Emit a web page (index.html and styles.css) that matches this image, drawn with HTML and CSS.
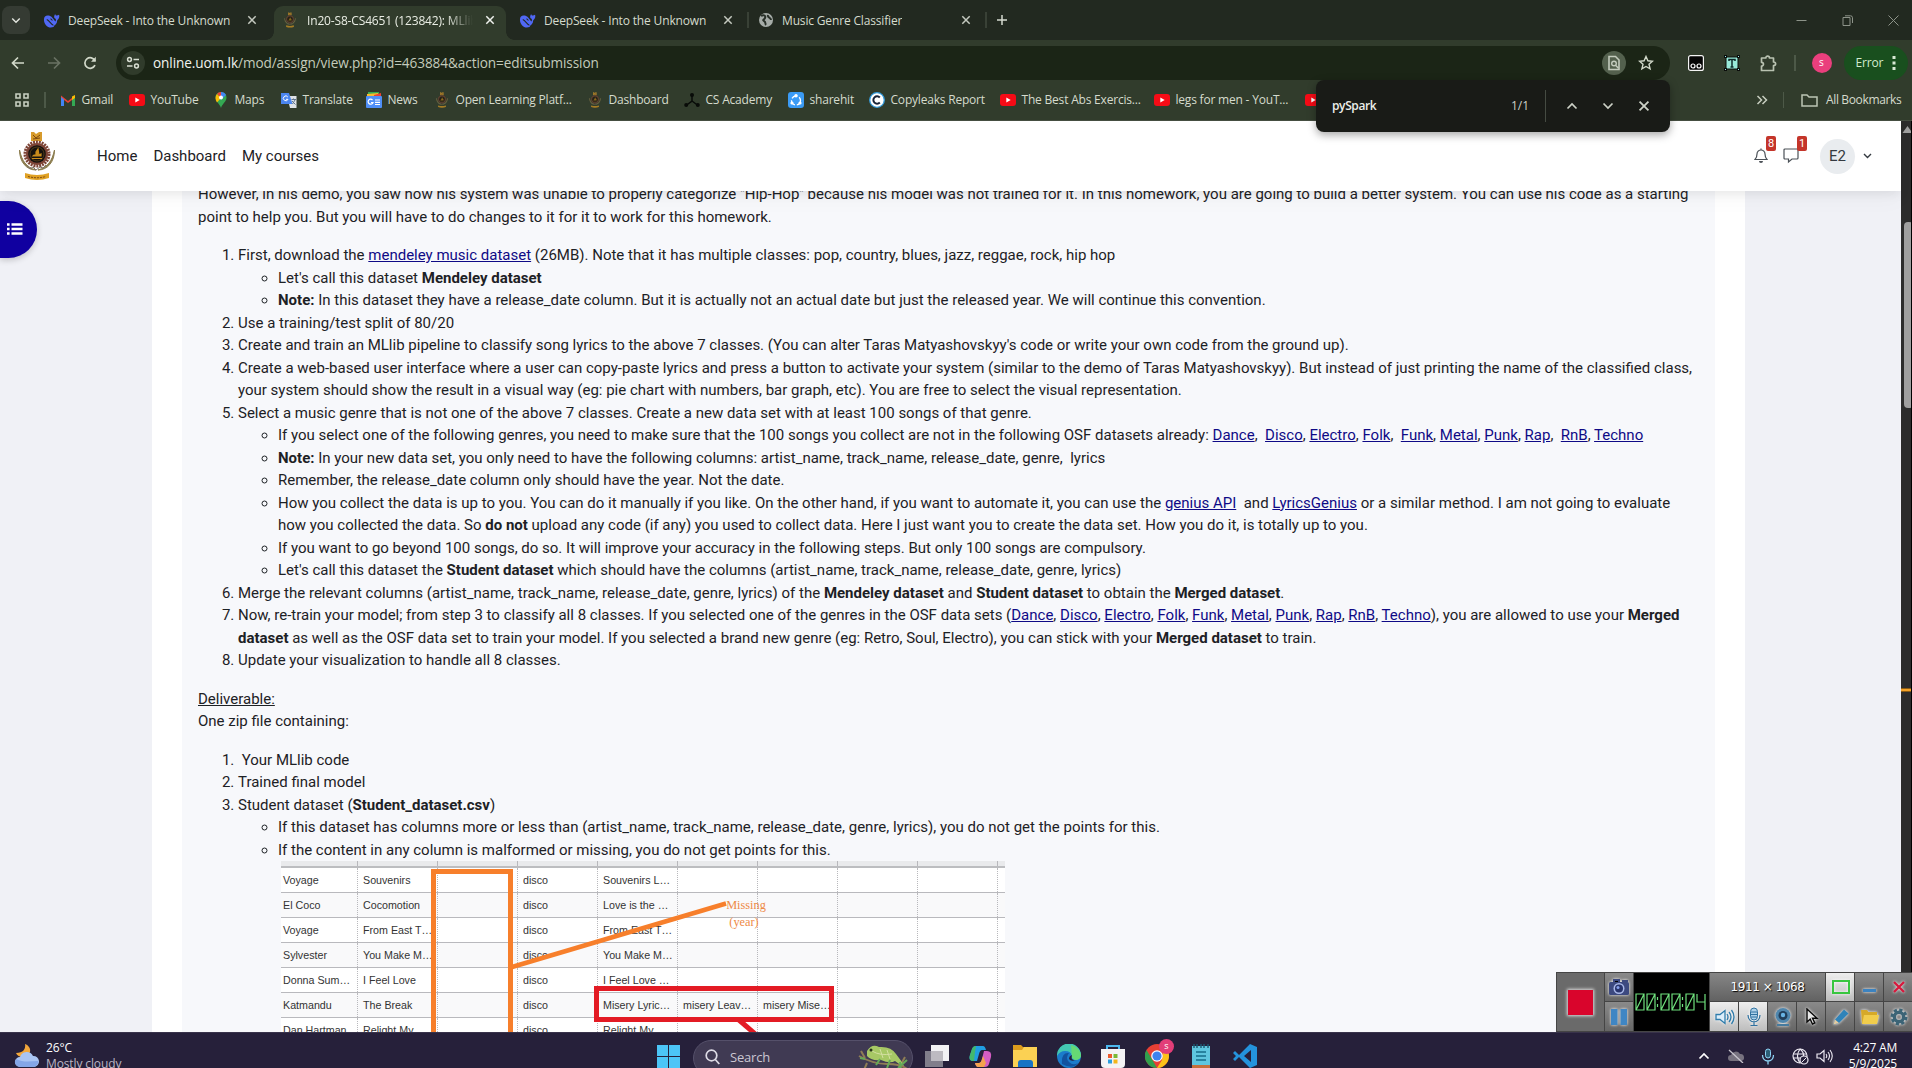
FILE: index.html
```html
<!DOCTYPE html>
<html lang="en">
<head>
<meta charset="utf-8">
<title>In20-S8-CS4651 (123842): MLlib</title>
<link rel="stylesheet" href="styles.css">
</head>
<body>
<svg class="defs" aria-hidden="true">
  <symbol id="whale" viewBox="0 0 18 18"><path d="M1 8C1 4 4 3 7 4c3 1 4 4 6 6 1-1 1-2 0-3-2-1-1-4 0-5 0 2 2 2 4 1 1 3-1 5-2 6 0 3-2 5-4 6 1 0 1 1 0 1-5 2-10-2-10-8z" fill="#5068f5"/><path d="M4 8c3 1 4 5 7 6M8 7l2 2" stroke="#222920" stroke-width="1.1" fill="none"/></symbol>
  <symbol id="x" viewBox="0 0 10 10"><path d="M1.3 1.3l7.4 7.4M8.7 1.3L1.3 8.7" stroke="currentColor" stroke-width="1.5" fill="none"/></symbol>
  <symbol id="crest" viewBox="0 0 38 50"><path d="M13 1h3l2 2 3-2h3v9H13z" fill="#d79b2c"/><path d="M15 4l3 3 4-3M15 8l7-1" stroke="#7c4a12" fill="none"/><circle cx="19" cy="23" r="12" fill="none" stroke="#7d4436" stroke-width="3" stroke-dasharray="2 .9"/><circle cx="19" cy="23" r="11" fill="#7d4436"/><circle cx="19" cy="23" r="8.800" fill="#15120f"/><circle cx="19" cy="23" r="7" fill="none" stroke="#6b4a1c" stroke-width=".7"/><path d="M14 27.500h10M15 25h8v-2l-2 1-1-6-2 3v3h-2z" stroke="#c98b1c" stroke-width="1.200" fill="#c98b1c"/><path d="M1.500 19c0 12 7 20 16.500 20C8 36 4 30 1.500 19zM36.500 19c0 12-7 20-16.500 20C30 36 34 30 36.500 19z" stroke="#8b7c4e" stroke-width="1" fill="#8b7c4e"/><path d="M9 35l3 3 3-2 3 3 4-3 3 1 3-3" stroke="#7d746a" fill="none"/><path d="M7 42q12 4 24 0v5q-12 4-24 0z" fill="#e0a124"/><path d="M10 45.500q9 2.500 18 0" stroke="#7c4a12" stroke-dasharray="2 1" fill="none"/></symbol>
  <symbol id="yt" viewBox="0 0 16 16"><rect y="2" width="16" height="12" rx="3" fill="#f60b16"/><path d="M6.300 5.500v5l4.400-2.500z" fill="#fff"/></symbol>
  <symbol id="up" viewBox="0 0 12 8"><path d="M1.500 6.500L6 2l4.500 4.500" stroke="currentColor" stroke-width="1.700" fill="none"/></symbol>
  <symbol id="down" viewBox="0 0 12 8"><path d="M1.500 1.500L6 6l4.500-4.500" stroke="currentColor" stroke-width="1.700" fill="none"/></symbol>
</svg>

<div class="browser">
  <div class="tabstrip">
    <button class="tabsearch"><svg width="10" height="7"><use href="#down"/></svg></button>
    <div class="tab first"><svg width="17" height="17"><use href="#whale"/></svg><span class="title">DeepSeek - Into the Unknown</span><svg class="close" width="10" height="10"><use href="#x"/></svg></div>
    <div class="tab active"><svg class="crest-small" width="12" height="16"><use href="#crest"/></svg><span class="title fade">In20-S8-CS4651 (123842): MLlib</span><svg class="close" width="10" height="10"><use href="#x"/></svg></div>
    <div class="tab third"><svg width="17" height="17"><use href="#whale"/></svg><span class="title">DeepSeek - Into the Unknown</span><svg class="close" width="10" height="10"><use href="#x"/></svg></div>
    <div class="tab fourth"><svg width="16" height="16" viewBox="0 0 16 16"><circle cx="8" cy="8" r="7" fill="#a6aca8"/><path d="M3 4c3-2 5 0 4 2S4 8 6 9s1 3 2 4M10 3c-1 3 3 2 3 5" stroke="#283028" stroke-width="2" fill="none"/></svg><span class="title">Music Genre Classifier</span><svg class="close" width="10" height="10"><use href="#x"/></svg></div>
    <svg class="plus" width="12" height="12"><path d="M6 1v10M1 6h10" stroke="#d5dacf" stroke-width="1.500"/></svg>
    <div class="winctl">
      <svg width="11" height="11"><path d="M.5 5.500h10" stroke="#8d9389"/></svg>
      <svg width="11" height="11"><path d="M1 2.500h7v8H1zM3 .8h5.500q2 0 2 2V8" stroke="#8d9389" fill="none"/></svg>
      <svg width="11" height="11"><path d="M.5.500l10 10M10.500.500l-10 10" stroke="#8d9389"/></svg>
    </div>
  </div>

  <div class="toolbar">
    <svg class="back" width="14" height="14"><path d="M13 7H2M7 1.500L1.500 7 7 12.500" stroke="#d2d9ca" stroke-width="1.700" fill="none"/></svg>
    <svg class="fwd" width="14" height="14"><path d="M1 7h11M7 1.500L12.500 7 7 12.500" stroke="#697263" stroke-width="1.700" fill="none"/></svg>
    <svg class="reload" width="14" height="14"><path d="M12 9.200A5.300 5.300 0 1 1 12 4.800" stroke="#d2d9ca" stroke-width="1.700" fill="none"/><path d="M12.800.8v5H8z" fill="#d2d9ca"/></svg>
    <div class="omnibox">
      <span class="siteinfo"><svg width="14" height="14"><circle cx="3.500" cy="3.500" r="1.900" stroke="#d8ded2" stroke-width="1.500" fill="none"/><circle cx="10.500" cy="10" r="1.900" stroke="#d8ded2" stroke-width="1.500" fill="none"/><path d="M7.500 3.500h5.500M1 10h5.500" stroke="#d8ded2" stroke-width="1.600"/></svg></span>
      <span class="url"><b>online.uom.lk</b>/mod/assign/view.php?id=463884&amp;action=editsubmission</span>
      <span class="findmark"><svg width="14" height="16"><path d="M2 1.500h6.500L12 5v9.500H2z" stroke="#c3cbbd" stroke-width="1.600" fill="none"/><circle cx="7" cy="8.500" r="2.300" stroke="#c3cbbd" stroke-width="1.400" fill="none"/><path d="M8.500 10.200l3 3" stroke="#c3cbbd" stroke-width="1.400"/></svg></span>
      <svg class="star" width="16" height="16"><path d="M8 1.500l1.900 4.300 4.600.4-3.500 3.100 1.100 4.600L8 11.500l-4.100 2.400L5 9.300 1.500 6.200l4.600-.4z" stroke="#d2d9ca" stroke-width="1.400" fill="none"/></svg>
    </div>
    <svg class="ext1" width="16" height="16"><rect x=".6" y=".6" width="14.800" height="14.800" rx="2" fill="#050505" stroke="#f4f4f4" stroke-width="1.200"/><circle cx="5" cy="11" r="2" fill="none" stroke="#fff" stroke-width="1.200"/><circle cx="11" cy="11" r="2" fill="none" stroke="#fff" stroke-width="1.200"/></svg>
    <svg class="ext2" width="16" height="16"><rect x="2" y="2" width="12" height="12" fill="#98ead9" stroke="#0a0d0a"/><path d="M5 6V4.500h6V6M8 4.500V12M6.500 12h3" stroke="#0d2a2a" stroke-width="1.500" fill="none"/><path d="M0 0h3v3H0zM13 0h3v3h-3zM0 13h3v3H0zM13 13h3v3h-3z" fill="#0b0d0b"/><path d="M1 1h1v1H1zM14 1h1v1h-1zM1 14h1v1H1zM14 14h1v1h-1z" fill="#9ee"/></svg>
    <svg class="puzzle" width="17" height="17"><path d="M1.500 3h4.300c0-2.600 3.700-2.600 3.700 0H13.500v4c2.800 0 2.800 3.700 0 3.700v4.800H1.500v-4.500c2.600 0 2.600-3.700 0-3.700z" stroke="#b9c2b1" stroke-width="1.700" fill="none" stroke-linejoin="round"/></svg>
    <i class="vsep"></i>
    <span class="profile">s</span>
    <span class="error">Error<svg width="4" height="16"><path d="M.5 1h3v3h-3zM.5 6.500h3v3h-3zM.5 12h3v3h-3z" fill="#d9ead5"/></svg></span>
  </div>

  <div class="bookmarks">
    <svg class="apps" width="14" height="14"><path d="M1 1h4v4H1zM9 1h4v4H9zM1 9h4v4H1zM9 9h4v4H9z" stroke="#c8cfc1" stroke-width="1.600" fill="none"/></svg>
    <i class="vsep"></i>
    <div class="items">
      <span><svg width="16" height="16"><path d="M1 14V3.500L8 9l7-5.500V14h-3V8l-4 3-4-3v6z" fill="#ea4335"/><path d="M1 5v9h3V7.500z" fill="#4285f4"/><path d="M15 5v9h-3V7.500z" fill="#34a853"/><path d="M12 4.500l3-1.500v3l-3 2z" fill="#fbbc04"/></svg><em>Gmail</em></span>
      <span><svg width="16" height="16"><use href="#yt"/></svg><em>YouTube</em></span>
      <span><svg width="16" height="16"><path d="M8 0a5.500 5.500 0 0 1 5.500 5.500C13.500 10 9.500 11 8 16 6.500 11 2.500 10 2.500 5.500A5.500 5.500 0 0 1 8 0z" fill="#34a853"/><path d="M8 0a5.500 5.500 0 0 1 5 3L8 8z" fill="#4285f4"/><path d="M4 2L8 6l-4 4.500C2 7.500 2 4 4 2z" fill="#fbbc04"/><path d="M4 1.800A5 5 0 0 1 8 0v6z" fill="#ea4335"/><circle cx="8" cy="5.500" r="2" fill="#fff"/></svg><em>Maps</em></span>
      <span><svg width="16" height="16"><path d="M6 4h9.500v12H9z" fill="#dfe3e8"/><path d="M0 1h8l3.500 11H0z" fill="#4b86f0"/><path d="M6.800 5A2.400 2.400 0 1 0 7 7.300H5" stroke="#fff" fill="none"/><path d="M10.500 7.500H15M12.500 6.500v1M11 9l3.500 3.500M14 8l-2.500 4" stroke="#60758e" fill="none"/></svg><em>Translate</em></span>
      <span><svg width="16" height="16"><path d="M2 0h11v6H2z" fill="#37a852"/><path d="M1 2l11-1v5H1z" fill="#f9bb2d"/><path d="M8 3l7-2v5H8z" fill="#e94335"/><rect y="4" width="16" height="12" rx="1" fill="#4f8ff7"/><path d="M6.500 8a2.500 2.500 0 1 0 .5 2.500H5M9 8h5M9 10.300h5M9 12.500h5" stroke="#fff" stroke-width="1.200" fill="none"/></svg><em>News</em></span>
      <span><svg class="crest-small" width="16" height="16"><use href="#crest"/></svg><em>Open Learning Platf...</em></span>
      <span><svg class="crest-small" width="16" height="16"><use href="#crest"/></svg><em>Dashboard</em></span>
      <span><svg width="16" height="16"><path d="M8 3v6L2 13.500M8 9l6 4.500" stroke="#080b08" stroke-width="1.500" fill="none"/><circle cx="8" cy="3" r="2" fill="#080b08"/><circle cx="2.200" cy="13" r="2" fill="#080b08"/><circle cx="13.800" cy="13" r="2" fill="#080b08"/></svg><em>CS Academy</em></span>
      <span><svg width="16" height="16"><rect width="16" height="16" rx="3" fill="#3b9bf5"/><circle cx="8" cy="8.500" r="4.500" fill="none" stroke="#fff" stroke-width="1.300" stroke-dasharray="6 2"/><circle cx="8" cy="3.800" r="1.700" fill="#fff"/><circle cx="4" cy="11" r="1.600" fill="#fff"/><circle cx="12" cy="11" r="1.600" fill="#fff"/></svg><em>sharehit</em></span>
      <span><svg width="16" height="16"><circle cx="8" cy="8" r="7.300" fill="#fff" stroke="#339bdc" stroke-width="1.300"/><path d="M10.800 5.500A3.700 3.700 0 1 0 10.800 10.500" stroke="#172236" stroke-width="2" fill="none"/></svg><em>Copyleaks Report</em></span>
      <span><svg width="16" height="16"><use href="#yt"/></svg><em>The Best Abs Exercis...</em></span>
      <span><svg width="16" height="16"><use href="#yt"/></svg><em>legs for men - YouT...</em></span>
      <span><svg width="16" height="16"><use href="#yt"/></svg></span>
    </div>
    <svg class="more" width="12" height="10"><path d="M1.500 1L5.500 5l-4 4M6.500 1l4 4-4 4" stroke="#c8cfc1" stroke-width="1.500" fill="none"/></svg>
    <i class="vsep"></i>
    <svg class="folder" width="17" height="13"><path d="M1 1h5l2 2h8v9H1z" stroke="#bcc5b4" stroke-width="1.500" fill="none"/></svg>
    <em class="all">All Bookmarks</em>
  </div>

  <div class="findbar"><b>pySpark</b><span>1/1</span><i></i><svg width="12" height="8"><use href="#up"/></svg><svg width="12" height="8"><use href="#down"/></svg><svg width="12" height="12"><use href="#x"/></svg></div>
</div>

<div class="viewport">
  <div class="page">
    <header class="sitenav">
      <svg class="logo" width="38" height="50"><use href="#crest"/></svg>
      <nav><a>Home</a><a>Dashboard</a><a>My courses</a></nav>
      <div class="user">
        <span class="ico bell"><svg width="14" height="16"><path d="M1 11.500h12c-1.500-1.500-2-2.500-2-5.500a4 4 0 0 0-8 0c0 3-.5 4-2 5.500zM7 .5v1.500" stroke="#4b5157" stroke-width="1.200" fill="none"/><path d="M5 13h4a2 2 0 0 1-4 0z" fill="#4b5157"/></svg><b>8</b></span>
        <span class="ico chat"><svg width="16" height="16"><path d="M2 1h12q1 0 1 1v8q0 1-1 1H9l-3.500 3V11H2q-1 0-1-1V2q0-1 1-1z" stroke="#4b5157" stroke-width="1.200" fill="none"/></svg><b>1</b></span>
        <span class="avatar">E2</span>
        <svg class="caret" width="9" height="6"><path d="M1 1l3.500 3.500L8 1" stroke="#343a40" stroke-width="1.400" fill="none"/></svg>
      </div>
    </header>
    <main>
      <button class="drawer"><svg width="16" height="12"><path d="M0 1.500h2.600M4.500 1.500h11M0 6h2.600M4.500 6h11M0 10.500h2.600M4.500 10.500h11" stroke="#fff" stroke-width="2.400"/></svg></button>
      <div class="card">
        <article>
          <p>However, in his demo, you saw how his system was unable to properly categorize "Hip-Hop" because his model was not trained for it. In this homework, you are going to build a better system. You can use his code as a starting<br>point to help you. But you will have to do changes to it for it to work for this homework.</p>
          <ol>
            <li>First, download the <a>mendeley music dataset</a> (26MB). Note that it has multiple classes: pop, country, blues, jazz, reggae, rock, hip hop
              <ul>
                <li>Let's call this dataset <b>Mendeley dataset</b></li>
                <li><b>Note:</b> In this dataset they have a release_date column. But it is actually not an actual date but just the released year. We will continue this convention.</li>
              </ul></li>
            <li>Use a training/test split of 80/20</li>
            <li>Create and train an MLlib pipeline to classify song lyrics to the above 7 classes. (You can alter Taras Matyashovskyy's code or write your own code from the ground up).</li>
            <li>Create a web-based user interface where a user can copy-paste lyrics and press a button to activate your system (similar to the demo of Taras Matyashovskyy). But instead of just printing the name of the classified class,<br>your system should show the result in a visual way (eg: pie chart with numbers, bar graph, etc). You are free to select the visual representation.</li>
            <li>Select a music genre that is not one of the above 7 classes. Create a new data set with at least 100 songs of that genre.
              <ul>
                <li>If you select one of the following genres, you need to make sure that the 100 songs you collect are not in the following OSF datasets already: <a>Dance</a>,&nbsp; <a>Disco</a>, <a>Electro</a>, <a>Folk</a>,&nbsp; <a>Funk</a>, <a>Metal</a>, <a>Punk</a>, <a>Rap</a>,&nbsp; <a>RnB</a>, <a>Techno</a></li>
                <li><b>Note:</b> In your new data set, you only need to have the following columns: artist_name, track_name, release_date, genre,&nbsp; lyrics</li>
                <li>Remember, the release_date column only should have the year. Not the date.</li>
                <li>How you collect the data is up to you. You can do it manually if you like. On the other hand, if you want to automate it, you can use the <a>genius API</a>&nbsp; and <a>LyricsGenius</a> or a similar method. I am not going to evaluate<br>how you collected the data. So <b>do not</b> upload any code (if any) you used to collect data. Here I just want you to create the data set. How you do it, is totally up to you.</li>
                <li>If you want to go beyond 100 songs, do so. It will improve your accuracy in the following steps. But only 100 songs are compulsory.</li>
                <li>Let's call this dataset the <b>Student dataset</b> which should have the columns (artist_name, track_name, release_date, genre, lyrics)</li>
              </ul></li>
            <li>Merge the relevant columns (artist_name, track_name, release_date, genre, lyrics) of the <b>Mendeley dataset</b> and <b>Student dataset</b> to obtain the <b>Merged dataset</b>.</li>
            <li>Now, re-train your model; from step 3 to classify all 8 classes. If you selected one of the genres in the OSF data sets (<a>Dance</a>, <a>Disco</a>, <a>Electro</a>, <a>Folk</a>, <a>Funk</a>, <a>Metal</a>, <a>Punk</a>, <a>Rap</a>, <a>RnB</a>, <a>Techno</a>), you are allowed to use your <b>Merged<br>dataset</b> as well as the OSF data set to train your model. If you selected a brand new genre (eg: Retro, Soul, Electro), you can stick with your <b>Merged dataset</b> to train.</li>
            <li>Update your visualization to handle all 8 classes.</li>
          </ol>
          <p><u>Deliverable:</u><br>One zip file containing:</p>
          <ol>
            <li>&nbsp;Your MLlib code</li>
            <li>Trained final model</li>
            <li>Student dataset (<b>Student_dataset.csv</b>)
              <ul>
                <li>If this dataset has columns more or less than (artist_name, track_name, release_date, genre, lyrics), you do not get the points for this.</li>
                <li>If the content in any column is malformed or missing, you do not get points for this.</li>
              </ul></li>
          </ol>
          <div class="sheet">
            <div class="row head"><i></i><i></i><i></i><i></i><i></i><i></i><i></i><i></i><i></i></div>
            <div class="row"><i>Voyage</i><i>Souvenirs</i><i></i><i>disco</i><i>Souvenirs L…</i><i></i><i></i><i></i><i></i></div>
            <div class="row"><i>El Coco</i><i>Cocomotion</i><i></i><i>disco</i><i>Love is the …</i><i></i><i></i><i></i><i></i></div>
            <div class="row"><i>Voyage</i><i>From East T…</i><i></i><i>disco</i><i>From East T…</i><i></i><i></i><i></i><i></i></div>
            <div class="row"><i>Sylvester</i><i>You Make M…</i><i></i><i>disco</i><i>You Make M…</i><i></i><i></i><i></i><i></i></div>
            <div class="row"><i>Donna Sum…</i><i>I Feel Love</i><i></i><i>disco</i><i>I Feel Love …</i><i></i><i></i><i></i><i></i></div>
            <div class="row"><i>Katmandu</i><i>The Break</i><i></i><i>disco</i><i>Misery Lyric…</i><i>misery Leav…</i><i>misery Mise…</i><i></i><i></i></div>
            <div class="row"><i>Dan Hartman</i><i>Relight My</i><i></i><i>disco</i><i>Relight My</i><i></i><i></i><i></i><i></i></div>
            <svg class="marks" width="724" height="182" viewBox="281 861 724 182"><path d="M433.500 1050V871.500h77V1050" stroke="#f77f2b" stroke-width="5" fill="none"/><path d="M512 967L726 903.500" stroke="#f77f2b" stroke-width="4.600"/><path d="M596.500 988.500h235v31h-235z" stroke="#e31b24" stroke-width="5" fill="none"/><path d="M739 1020l22 19" stroke="#e31b24" stroke-width="5"/></svg>
            <span class="note">Missing<br><span>(year)</span></span>
          </div>
        </article>
      </div>
    </main>
  </div>
  <div class="scrollbar"><svg width="10" height="9"><path d="M1.500 8L6.500 1 11.500 8z" fill="#a0a0a0"/></svg><i class="thumb"></i><i class="hit"></i></div>
  <div class="edge"></div>
</div>

<div class="recorder">
  <span class="rec"><i></i></span>
  <div class="col">
    <span class="cell"><svg width="22" height="18"><rect x="1" y="4" width="20" height="13" rx="1.500" fill="#3d4a80"/><path d="M6 4V2h5v2M15 4V3h4v1" stroke="#3d4a80" stroke-width="2"/><circle cx="11" cy="10.500" r="5.500" fill="#a9b8e8"/><circle cx="11" cy="10.500" r="4" fill="#28346c"/><circle cx="10" cy="9.500" r="1.500" fill="#87a0ea"/></svg></span>
    <span class="cell"><svg width="16" height="16"><path d="M0 0h6.500v16H0zM9.500 0H16v16H9.500z" fill="#3f86c4"/></svg></span>
  </div>
  <div class="timer">
    <svg width="72" height="20" viewBox="0 0 72 20" aria-label="00:00:04"><g stroke="#6fe07d" stroke-width="1.200" fill="none"><path id="z" d="M1 2h8v16H1zM9 2L1 18"/><use href="#z" x="11"/><use href="#z" x="25"/><use href="#z" x="36"/><use href="#z" x="50"/><path d="M62 2v8h8M70 2v16"/><path d="M22.500 5v3M22.500 12v3M47.500 5v3M47.500 12v3"/></g></svg>
  </div>
  <div class="controls">
    <span class="size">1911 × 1068</span>
    <span class="cell on"><svg width="18" height="14"><path d="M1 1h16v12H1z" stroke="#38c63f" stroke-width="2" fill="none"/></svg></span>
    <span class="cell"><svg width="14" height="14"><path d="M0 9h13v3H0z" fill="#3c83c0"/></svg></span>
    <span class="cell"><svg width="12" height="12"><path d="M1 1l10 10M11 1L1 11" stroke="#d8173c" stroke-width="2.300"/></svg></span>
    <span class="cell on"><svg width="20" height="18"><path d="M1 6.500h4l5-4v13l-5-4H1z" fill="#dceefa" stroke="#2f7cab" stroke-width="1.300"/><path d="M12 6q2 3 0 6M14 4q4 5 0 10M16.500 2q5 7 0 14" stroke="#2f7cab" stroke-width="1.300" fill="none"/></svg></span>
    <span class="cell on"><svg width="14" height="20"><rect x="3.500" y="1" width="7" height="12" rx="3.500" fill="#acd0e8" stroke="#2f719f"/><path d="M4 5h6M4 7.500h6M4 10h6M1 8c0 9 12 9 12 0M7 15v3M3.500 18.500h7" stroke="#2f719f" stroke-width="1.200" fill="none"/></svg></span>
    <span class="cell"><svg width="18" height="20"><circle cx="9" cy="8.500" r="7.500" fill="#4f86ad"/><circle cx="9" cy="8.500" r="4.500" fill="#213e5a"/><circle cx="9" cy="8" r="2.200" fill="#6ab4e4"/><path d="M3 17h12v2H3z" fill="#477b9f"/></svg></span>
    <span class="cell"><svg width="14" height="18"><path d="M2 1v13l3.200-2.800L7.500 16l2.300-1-2.300-4.700H12z" fill="#e8e8e8" stroke="#080808" stroke-width="1.400"/></svg></span>
    <span class="cell"><svg width="18" height="18"><path d="M1.500 16.500l1.500-5L12 1.500l4.500 4L7 15z" fill="#2f83b9"/><path d="M1.500 16.500l1.500-5 4 3.500z" fill="#e5cba0"/></svg></span>
    <span class="cell"><svg width="18" height="16"><path d="M0 1h6l1.500 2H16v12H1z" fill="#d6a928"/><path d="M3 6h15l-2 9H1z" fill="#f1cd4c"/></svg></span>
    <span class="cell"><svg width="18" height="18"><circle cx="9" cy="9" r="7" fill="none" stroke="#3c6476" stroke-width="3" stroke-dasharray="3.200 2.300"/><circle cx="9" cy="9" r="4.700" fill="none" stroke="#3c6476" stroke-width="3.500"/></svg></span>
  </div>
</div>

<footer class="taskbar">
  <svg class="weather" width="26" height="25"><path d="M11 1c1 5-2 9-9 9 2 5 11 6 14-1 1-4-2-7-5-8z" fill="#f2a73b"/><path d="M6 24a5 5 0 0 1 0-10 7 7 0 0 1 13-1 5.500 5.500 0 0 1 1 11z" fill="#a9c4f3"/><path d="M6 24a5 5 0 0 1-4-8c8 4 15 2 22 2a5 5 0 0 1-4 6z" fill="#84a6e7"/></svg>
  <div class="temp">26°C<br><span>Mostly cloudy</span></div>
  <svg class="start" width="24" height="24"><path d="M0 0h11v11H0zM12 0h11v11H12zM0 12h11v11H0zM12 12h11v11H12z" fill="#4cc5f7"/></svg>
  <div class="search"><svg width="15" height="16"><circle cx="6.500" cy="6.500" r="5.300" stroke="#dedce6" stroke-width="1.700" fill="none"/><path d="M10.300 10.500l4 4.500" stroke="#dedce6" stroke-width="1.700"/></svg><span>Search</span>
    <svg class="lizard" width="52" height="26"><path d="M1 11q14 8 28 8t20 5M9 18l-3 7M3 6l4 7M47 12l-5 9" stroke="#8f7d55" stroke-width="2" fill="none"/><path d="M9 6q5-8 12-4 12-1 17 7 5 6 8 12-6-2-9-5-5 3-14-1-10 1-14-4z" fill="#a7c865"/><path d="M14 6q8 5 20 3M22 4l3 9M29 5l3 9" stroke="#d3dfa0" fill="none"/><path d="M22 14l-4 6M32 15l-3 8M42 17l1 7M2 13l5 1M40 23l9-8" stroke="#63a957" stroke-width="2"/><circle cx="13" cy="5" r="1.500" fill="#28351b"/></svg></div>
  <svg class="app taskview" width="24" height="24"><rect x="6" width="18" height="16" fill="#f2f1f4"/><rect y="6" width="18" height="16" fill="#8c8895" fill-opacity=".9"/><path d="M6 6h12v10H6z" fill="#bdbac1"/></svg>
  <svg class="app copilot" width="24" height="24"><path d="M7 1h7q2 0 3 4h-4q-2 0-3 4l-2 7H5q-6 0-4-6l2-6q1-3 4-3z" fill="#209de1"/><path d="M1 10l2-6q1-3 4-3l-1 6-1 9q-6 0-4-6z" fill="#43b86c"/><path d="M15 6h3q5 0 4 6l-2 7q-1 3-4 3H9q-2 0-3-4h4q2 0 3-4z" fill="#d45dc3"/><path d="M6 18h4q2 0 3-4l1-3 3 7-2 4H9q-2 0-3-4z" fill="#f4a34e"/></svg>
  <svg class="app" width="24" height="24"><path d="M0 1h8l2 2h14v20H0z" fill="#dc9c1d"/><path d="M0 6h9l2-3h13v20H0z" fill="#fbd153"/><path d="M5 23v-4q0-3 3-3h9q3 0 3 3v4z" fill="#1974c5"/></svg>
  <svg class="app" width="24" height="24"><circle cx="12" cy="12" r="12" fill="#1b7ccb"/><path d="M0 12A12 12 0 0 1 24 11q0 5-6 5-4-1-3-4-1-5-7-5-5 0-8 5z" fill="#43c7b1"/><path d="M14 1q10 3 10 11-1 4-6 4l-3-2z" fill="#66d974"/><path d="M5 20q-1-12 7-11-4 5 0 9 4 4 9 1-5 7-16 1z" fill="#12539f"/><path d="M15 11q-2 6 4 5-5 2-7-1 0-3 3-4z" fill="#26203a"/></svg>
  <svg class="app" width="24" height="24"><path d="M6 6V2h12v4" stroke="#4cb8ee" stroke-width="2" fill="none"/><path d="M0 5h24v15q0 4-4 4H4q-4 0-4-4z" fill="#f4f3f5"/><path d="M7 10h4v4H7z" fill="#ed5a2c"/><path d="M12.500 10h4v4h-4z" fill="#7ab936"/><path d="M7 15.500h4v4H7z" fill="#2b9ee0"/><path d="M12.500 15.500h4v4h-4z" fill="#f4b61b"/></svg>
  <div class="app chrome"><svg width="24" height="24"><circle cx="12" cy="12" r="12" fill="#e64034"/><path d="M1.500 6l6 10L12 24A12 12 0 0 1 1.500 6z" fill="#31a04d"/><path d="M12 24l5-8 1-8h5.300A12 12 0 0 1 12 24z" fill="#fbc219"/><circle cx="12" cy="12" r="5.800" fill="#fff"/><circle cx="12" cy="12" r="4.600" fill="#3f82ee"/></svg><b>s</b></div>
  <svg class="app note-app" width="20" height="24"><path d="M1 2h18v19H1z" fill="#5fc6df"/><path d="M3 0v4M6 0v4M10 0v4M13 0v4M17 0v4" stroke="#1b5a72" stroke-width="1.400"/><path d="M5 8h10M5 12h10M5 16h10" stroke="#176d8b" stroke-width="1.700"/><path d="M1 21h18v3H1z" fill="#c66f3b"/></svg>
  <svg class="app" width="24" height="24"><path d="M17 0l7 3v18l-7 3L6 13l-4 4-2-2 3-3-3-3 2-2 4 4zM18 6l-7 6 7 6z" fill="#2493dc" fill-rule="evenodd"/></svg>
  <div class="tray">
    <svg width="12" height="8"><use href="#up"/></svg>
    <svg width="18" height="14"><path d="M4 12a3 3 0 0 1 0-6 5 5 0 0 1 9-1 3.500 3.500 0 0 1 1 7z" fill="#77727f"/><path d="M2 1l14 13" stroke="#c9c5ce" stroke-width="1.300"/></svg>
    <svg width="14" height="17"><rect x="4.500" y="1" width="5" height="9" rx="2.500" fill="#2c5f78" stroke="#8fd4f5"/><path d="M1.500 7c0 8 11 8 11 0M7 13v3.500" stroke="#8fd4f5" stroke-width="1.300" fill="none"/></svg>
    <svg width="17" height="17"><circle cx="8" cy="8" r="7" stroke="#eeeaf3" stroke-width="1.200" fill="none"/><path d="M1 6h14M1 10h8M8 1q-5 7 0 14M8 1q4 3 3.500 7" stroke="#eeeaf3" stroke-width="1.200" fill="none"/><circle cx="12" cy="12" r="4" fill="#26203a" stroke="#eeeaf3" stroke-width="1.200"/><path d="M9.500 14.500l5-5" stroke="#eeeaf3"/></svg>
    <svg width="17" height="14"><path d="M1 5h3l4-3.500v11L4 9H1z" stroke="#eeeaf3" stroke-width="1.200" fill="none"/><path d="M10 5q1.500 2 0 4M12 3q3 4 0 8M14 1q4.500 6 0 12" stroke="#eeeaf3" stroke-width="1.100" fill="none"/></svg>
    <div class="clock">4:27 AM<br>5/9/2025</div>
  </div>
</footer>
</body>
</html>
```
FILE: styles.css
```css
* { box-sizing: border-box; }
body { margin: 0; width: 1912px; height: 1068px; overflow: hidden; position: relative; display: flex; flex-direction: column; background: #000; }
button { border: 0; padding: 0; }
svg { display: block; flex: none; }
.defs { position: absolute; width: 0; height: 0; }
i, em { font-style: normal; }

/* browser chrome */
.browser { flex: none; height: 121px; background: #313c2c; color: #d5dbcd; font: 12px/16px "Open Sans", "Noto Sans", sans-serif; position: relative; z-index: 5; border-bottom: 1px solid #454e41; }
.tabstrip { height: 40px; background: #222920; display: flex; align-items: center; }
.tabsearch { width: 28px; height: 28px; margin-left: 2px; border-radius: 8px; background: #353b33; color: #e3e6df; display: flex; align-items: center; justify-content: center; }
.tab { display: flex; align-items: center; height: 40px; position: relative; }
.tab .title { white-space: nowrap; letter-spacing: -.16px; overflow: hidden; padding-top: 2px; }
.tab .close { margin-left: auto; color: #c4c9bf; }
.first { margin-left: 13px; width: 214px; gap: 8px; }
.active { height: 34px; align-self: flex-end; margin-left: 17px; width: 232px; padding: 0 11px 6px 10px; gap: 11px; background: #313c2c; border-radius: 9px 9px 0 0; color: #e9ede4; }
.active::before, .active::after { content: ""; position: absolute; bottom: 0; width: 8px; height: 8px; }
.active::before { left: -8px; background: radial-gradient(circle at 0 0, #222920 7.5px, #313c2c 8px); }
.active::after { right: -8px; background: radial-gradient(circle at 100% 0, #222920 7.5px, #313c2c 8px); }
.active .title { width: 166px; -webkit-mask-image: linear-gradient(90deg, #000 84%, transparent 100%); }
.active .close { color: #f0f2ee; }
.crest-small { opacity: .72; }
.third { margin-left: 13px; width: 214px; gap: 8px; }
.fourth { margin-left: 14px; width: 224px; padding-left: 11px; gap: 8px; }
.fourth::before, .fourth::after { content: ""; position: absolute; left: 0; top: 12px; width: 2px; height: 16px; background: #394136; }
.fourth::after { left: 238px; }
.plus { margin-left: 25px; }
.winctl { margin-left: auto; display: flex; gap: 35px; padding-right: 13px; }
.toolbar { height: 46px; display: flex; align-items: center; }
.back { margin-left: 11px; }
.fwd, .reload { margin-left: 22px; }
.omnibox { margin-left: 19px; width: 1554px; height: 34px; border-radius: 17px; background: #1b2516; display: flex; align-items: center; padding: 0 16px 0 5px; }
.siteinfo, .findmark { width: 24px; height: 24px; border-radius: 50%; background: #303b2b; display: flex; align-items: center; justify-content: center; }
.url { font-size: 13.6px; margin-left: 8px; letter-spacing: -.09px; color: #c3cbbb; }
.url b { font-weight: 400; color: #f1f3ee; }
.findmark { margin-left: auto; background: #53604d; }
.star { margin-left: 12px; }
.ext1 { margin-left: 18px; }
.ext2 { margin-left: 20px; }
.puzzle { margin-left: 20px; }
.vsep { width: 1.5px; height: 16px; background: #4d5948; }
.toolbar .vsep { margin-left: 17px; }
.profile { width: 20px; height: 20px; border-radius: 50%; background: #ea3f7d; color: #fff; text-align: center; font-size: 10px; line-height: 19px; margin-left: 16px; }
.error { margin-left: 12px; width: 64px; height: 34px; border-radius: 17px; background: #194f1e; color: #d3ecce; display: flex; align-items: center; padding-left: 12px; letter-spacing: -.2px; }
.error svg { margin-left: auto; margin-right: 12px; }
.bookmarks { height: 28px; display: flex; align-items: center; white-space: nowrap; }
.apps { margin-left: 15px; }
.bookmarks .vsep { margin-left: 15px; }
.bookmarks em { letter-spacing: -.2px; }
.items { display: flex; margin-left: 14px; width: 1696px; }
.items span { display: flex; align-items: center; gap: 6px; flex: none; width: 69px; }
.items span:nth-child(2) { width: 84px; }
.items span:nth-child(3) { width: 68px; }
.items span:nth-child(4) { width: 85px; }
.items span:nth-child(5) { width: 68px; }
.items span:nth-child(6) { width: 153px; }
.items span:nth-child(7) { width: 97px; }
.items span:nth-child(8) { width: 104px; }
.items span:nth-child(9) { width: 81px; }
.items span:nth-child(10) { width: 131px; }
.items span:nth-child(11) { width: 154px; }
.items span:nth-child(12) { width: 151px; }
.items span:nth-child(13) { width: 16px; }
.folder { margin-left: 17px; }
.bookmarks em.all { margin: 0 0 0 8px; letter-spacing: -.36px; }
.findbar { position: absolute; left: 1316px; top: 80px; width: 354px; height: 52px; border-radius: 8px; background: #191b17; display: flex; align-items: center; padding: 0 20px 0 16px; box-shadow: 0 3px 8px rgba(0,0,0,.35); color: #cdd2c7; }
.findbar b { font-weight: 600; color: #eceee9; width: 180px; letter-spacing: -.38px; }
.findbar i { width: 1px; height: 32px; background: #454b42; margin: 0 20px 0 16px; }
.findbar svg + svg { margin-left: 24px; }

/* viewport */
.viewport { height: 911px; display: flex; overflow: hidden; }
.page { width: 1901px; background: #f0f1f6; font: 15px/22.5px Roboto, sans-serif; color: #1d2125; }
.sitenav { height: 70px; background: #fff; display: flex; align-items: center; padding-left: 18px; position: relative; z-index: 2; box-shadow: 0 3px 10px rgba(0,0,0,.07), 0 8px 22px rgba(0,0,0,.03); }
.sitenav nav { display: flex; gap: 16px; margin-left: 41px; }
.user { margin-left: auto; display: flex; align-items: center; height: 70px; }
.ico { position: relative; }
.bell { margin-right: 15px; }
.chat { margin-right: 21px; }
.ico b { position: absolute; left: 12px; top: -12px; width: 10px; height: 15px; border-radius: 2px; background: #c4352a; color: #fff; font: 11px/15px Roboto, sans-serif; text-align: center; }
.chat b { left: 14px; }
.avatar { width: 35px; height: 35px; border-radius: 50%; background: #e9ecef; line-height: 35px; text-align: center; color: #343a40; }
.caret { margin: 0 29px 0 8px; }
main { height: 841px; display: flex; }
.drawer { width: 37px; height: 57px; margin-top: 10px; border-radius: 0 29px 29px 0; background: #1000a0; display: flex; align-items: center; padding: 0 0 2px 7px; box-shadow: 0 2px 6px rgba(0,0,0,.2); }
.card { margin-left: 115px; width: 1593px; background: #fff; padding: 0 30px; }
article { background: #f7f8fb; height: 841px; padding: 0 15px 0 16px; white-space: nowrap; overflow: hidden; }
article p { margin: 0 0 16px; }
article p:first-child { margin-top: -8px; }
article ol, article ul { margin: 0; padding-left: 40px; }
article ol + p { margin-top: 16px; }
article b { font-weight: 700; }
article a { color: #0f0a86; text-decoration: underline; }
.sheet { margin: 0 0 0 83px; width: 724px; height: 182px; overflow: hidden; background: #fff; position: relative; font: 10.700px/24px "Liberation Sans", Arial, sans-serif; color: #333; }
.row { display: grid; grid-template-columns: 77px repeat(8, 80px); height: 25px; border-bottom: 1px solid #b9b9bd; }
.row:nth-child(odd) { background: #f9f9fa; }
.row i { border-right: 1px dotted #b8b8bc; padding-left: 5px; white-space: nowrap; }
.row i:first-child { padding-left: 2px; }
.row.head { height: 7px; background: #e9eaec; border-bottom: 2px solid #bcbdc0; }
.head i { border-right-style: solid; }
.marks { position: absolute; left: 0; top: 0; }
.note { position: absolute; left: 444px; top: 36px; width: 42px; text-align: center; font: 12.3px/17px "Liberation Serif", serif; color: #ee8a47; }
.note span { padding-right: 4px; }
.scrollbar { width: 10px; background: #2c2c2c; overflow: hidden; position: relative; }
.scrollbar svg { margin-top: 4px; }
.thumb { position: absolute; left: 3px; top: 101px; width: 9px; height: 186px; border-radius: 4px; background: #9f9f9f; }
.hit { position: absolute; left: 0; top: 567px; width: 10px; background: #f3a229; border: solid #8a5b14; border-width: 1px 0; height: 4px; }
.edge { width: 1px; background: #000; }

/* screen recorder overlay */
.recorder { position: absolute; z-index: 6; left: 1556px; top: 972px; width: 356px; height: 60px; padding: 1px 0 1px 1px; background: #454545; display: flex; gap: 1px; overflow: hidden; }
.rec { width: 48px; background: #6a6a6a; display: flex; align-items: center; justify-content: center; }
.rec i { width: 25px; height: 25px; background: #d9052c; box-shadow: 0 0 3px 1px #ddd; }
.col { display: grid; grid-template-rows: 28px 29px; gap: 1px; width: 28px; }
.cell { display: flex; align-items: center; justify-content: center; background: linear-gradient(#8a8a8a, #666); padding-left: 1px; }
.cell svg { filter: drop-shadow(0 0 1.500px #fff); }
.cell.on { background: linear-gradient(#eee, #bdbdbd); }
.timer { width: 77px; background: #000; display: flex; align-items: center; justify-content: center; }
.controls { display: grid; grid-template: 28px 29px / repeat(7, 28px); gap: 1px; }
.size { grid-column: span 4; background: linear-gradient(#868686, #626262); color: #fff; font: 12px/28px "DejaVu Sans", sans-serif; text-align: center; text-shadow: 1px 1px 1px #000; letter-spacing: -.45px; }

/* taskbar */
.taskbar { height: 36px; background: #26203a; border-top: 1px solid #39334b; display: flex; color: #fff; font: 12px/16px "Open Sans", "Noto Sans", sans-serif; overflow: hidden; }
.weather { margin: 10px 0 0 14px; }
.temp { margin: 7px 0 0 6px; width: 90px; height: 34px; white-space: nowrap; flex: none; letter-spacing: -.12px; }
.temp span { color: #bbb6c4; }
.start { margin: 12px 0 0 521px; }
.search { flex: none; margin: 7px 0 0 12px; width: 220px; height: 36px; border-radius: 18px; background: #403a53; border: 1px solid #55506a; display: flex; padding-left: 11px; font-size: 13px; color: #cbc7d2; }
.search > svg:first-child { margin-top: 8px; }
.search span { margin: 8px 0 0 10px; width: 84px; letter-spacing: -.2px; }
.search .lizard { margin: 4px 0 0 44px; }
.app { flex: none; margin: 11px 0 0 20px; }
.app.taskview { margin: 12px 0 0 12px; }
.app.copilot { margin-top: 12px; margin-left: 20px; }
.chrome { position: relative; }
.chrome b { position: absolute; left: 14px; top: -5px; width: 15px; height: 15px; border-radius: 50%; background: #e23e78; font: 9px/14px "Open Sans", sans-serif; text-align: center; }
.note-app { margin-left: 22px; }
.note-app + .app { margin-left: 22px; }
.tray { margin-left: auto; display: flex; align-items: center; height: 46px; padding-right: 15px; }
.tray svg:nth-child(2) { margin-left: 17px; }
.tray svg:nth-child(3) { margin-left: 16px; }
.tray svg:nth-child(4) { margin-left: 17px; }
.tray svg:nth-child(5) { margin-left: 7px; }
.clock { width: 64px; text-align: right; letter-spacing: -.2px; white-space: nowrap; }
```
